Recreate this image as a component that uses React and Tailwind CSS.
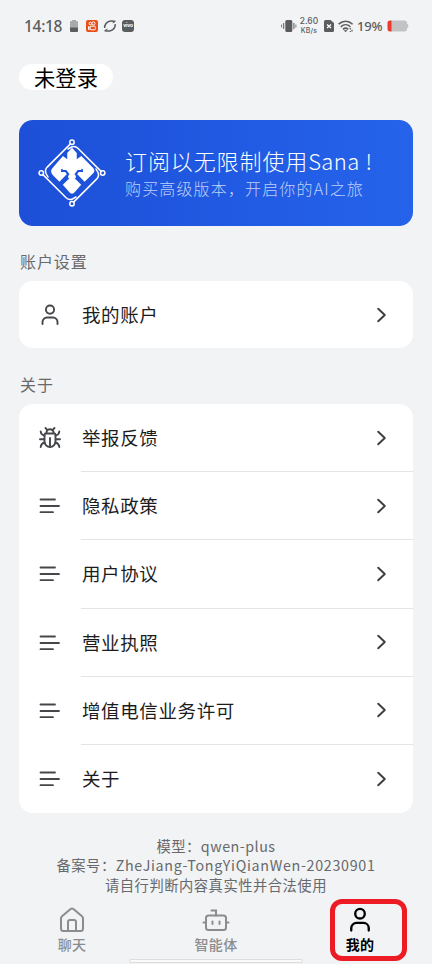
const ABOUT_ITEMS = ['举报反馈', '隐私政策', '用户协议', '营业执照', '增值电信业务许可', '关于'];

function StatusBar() {
  return (
    <div className="h-[52px] flex items-center justify-between pl-[24px] pr-[24px] text-[#5b5c5e]">
      <div className="flex items-center">
        <span className="w-[45px] text-[15.5px] font-medium tracking-[-0.3px] font-['Noto_Sans','Noto_Sans_CJK_SC',sans-serif] leading-[20px] whitespace-nowrap">14:18</span>
        <svg width="10" height="14" viewBox="0 0 10 14" className="shrink-0">
          <path d="M3 1h4v1h1q1 0 1 1v6H1V3q0-1 1-1h1z" fill="#a9aaab" />
          <path d="M1 8.5h8V12q0 1-1 1H2q-1 0-1-1z" fill="#5b5c5e" />
        </svg>
        <svg width="12" height="12" viewBox="0 0 12 12" className="ml-[7px] shrink-0">
          <rect width="12" height="12" rx="2" fill="#e84f19" />
          <g fill="none" stroke="#fff" strokeWidth="1">
            <circle cx="4.3" cy="3.5" r="1.3" />
            <circle cx="7.4" cy="3.4" r="1.6" />
            <rect x="4.2" y="6.2" width="5.2" height="3.6" rx="1" />
            <path d="M4.2 7.3 2.5 6.6v3l1.7-.7" />
          </g>
        </svg>
        <svg width="14" height="14" viewBox="0 0 14 14" className="ml-[5px] shrink-0" fill="none" stroke="#5b5c5e">
          <path d="M1.800 8.800C1.200 6 3.700 3 6.500 2.300 8.500 1.800 10.500 1.900 12.300 2.600" strokeWidth="1.600" />
          <path d="M12.200 5.200c.6 2.800-1.900 5.800-4.700 6.500C5.500 12.200 3.500 12.100 1.700 11.400" strokeWidth="1.600" />
          <path d="M1.700 11.700 4.500 10M12.300 2.300 9.700 4" strokeWidth="1" />
        </svg>
        <div className="ml-[5px] w-[12px] h-[12px] rounded-[3px] bg-[#5b5c5e] text-white text-[5px] leading-[11px] text-center font-bold font-['Inter',sans-serif] tracking-[-0.2px]">vivo</div>
      </div>
      <div className="flex items-center">
        <svg width="16" height="14" viewBox="0 0 16 14" fill="#5b5c5e" className="shrink-0">
          <rect x="4.300" y="1" width="7" height="12" rx="1.500" />
          <path d="M2.200 4h1v6h-1zM.3 5.500h.8v3H.3zM12.400 4h1v6h-1zM14.500 5.500h.8v3h-.8z" />
        </svg>
        <div className="ml-[2px] w-[20px] h-[18px] flex flex-col justify-between items-center font-medium font-['Inter',sans-serif] whitespace-nowrap">
          <span className="text-[8.500px] leading-[9px]">2.60</span>
          <span className="text-[7px] leading-[8px] tracking-[0.2px]">KB/s</span>
        </div>
        <svg width="10" height="12" viewBox="0 0 10 12" className="ml-[5px] shrink-0">
          <path d="M1.500 0H6.500L10 3v7.500Q10 12 8.500 12h-7Q0 12 0 10.500v-9Q0 0 1.500 0z" fill="#5b5c5e" />
          <path d="M3 4.500 7 8M7 4.500 3 8" stroke="#fff" strokeWidth="1.300" />
        </svg>
        <svg width="16" height="13" viewBox="0 0 16 13" className="ml-[4px] shrink-0" fill="none" stroke="#5b5c5e" strokeWidth="1.600">
          <path d="M.6 4.200C5 .2 10.500.2 14.600 4.200M2.800 6.800c3-2.800 6.800-2.800 9.600 0M5 9.300c1.600-1.500 3.600-1.500 5.200 0" />
          <path d="M6.200 10.300h2.800L7.600 12z" fill="#5b5c5e" strokeWidth=".5" />
          <path d="M12.300 7.800v1.800M14 9.800v1.800M12.300 11v1" strokeWidth="1.200" />
        </svg>
        <span className="ml-[3px] w-[27px] text-[13px] font-medium font-['Noto_Sans',sans-serif] leading-[20px] tracking-[-0.2px] whitespace-nowrap">19%</span>
        <svg width="22" height="12" viewBox="0 0 22 12" className="ml-[3px] -mr-px shrink-0">
          <path d="M4 .5h13.500q2.500 0 2.500 2.500v.7q1.300.3 1.300 1.300v2q0 1-1.300 1.300V9q0 2.500-2.500 2.500H4z" fill="#c3c3c6" />
          <path d="M4.500.5v11H3Q.5 11.500.5 9V3Q.5.5 3 .5z" fill="#ee3b2f" />
        </svg>
      </div>
    </div>
  );
}

// one circuit arm per side, each turned by 90 degrees around the centre
function Logo() {
  return (
    <svg width="68" height="68" viewBox="0 0 68 68" fill="none" className="shrink-0">
      {[0, 90, 180, 270].map(angle => (
        <g key={angle} stroke="#fff" strokeWidth="1.500" strokeLinecap="round" transform={`rotate(${angle} 34 34)`}>
          <circle cx="34" cy="3.300" r="2.200" />
          <path d="M32.400 4.900 9.200 28.100Q6.500 31 8 34.500L10 38" />
        </g>
      ))}
      <g transform="translate(34 33.500) scale(.95) translate(-34 -33)">
        <path
          d="M34 7 39 12.500V19l4.800-3.300L56.600 28.500q1.800 2.300 0 5L47 43 38 35.500 34 37.500 30 35.500 21 43 13.500 35.300Q10.500 31.500 13.500 28.300L24.500 15.700 29 19v-6.500z"
          fill="#fff"
        />
        <path d="M34 36.500 43.700 46 36 54.500q-2 1.500-4 0L24.300 46z" fill="#fff" />
        <path d="M30 33h8v6h-8z" fill="#fff" />
        <path d="M23.500 29.500v2h4l2.500 3.300L21.500 43.500M44.500 29.500v2h-4L38 34.800l8.500 8.700" stroke="#1f53db" strokeWidth="2.200" />
      </g>
    </svg>
  );
}

function UserIcon({ size = 24, width = 1.9 }) {
  return (
    <svg width={size} height={size} viewBox="0 0 24 24" fill="none" stroke="currentColor" strokeWidth={width} strokeLinecap="round">
      <circle cx="12" cy="6.600" r="4.100" />
      <path d="M4.500 21v-2a4.500 4.500 0 0 1 4.500-4.500h6a4.500 4.500 0 0 1 4.500 4.500v2" />
    </svg>
  );
}

function BugIcon() {
  return (
    <svg width="24" height="24" viewBox="0 0 24 24" fill="none" stroke="currentColor" strokeWidth="1.900" strokeLinecap="round">
      <path d="M7.500 2l1.700 1.800M16.500 2l-1.700 1.800" />
      <path d="M8.500 7V6.300a3.500 3 0 0 1 7 0V7" />
      <path d="M6.500 8.500q0-1 1-1h9q1 0 1 1v6.700a5.500 5.800 0 0 1-11 0z" />
      <path d="M12 12v8.500M6.500 9.500Q3 9 2.700 5.500M17.500 9.500Q21 9 21.300 5.500M6.300 13.300H2M17.700 13.300H22M6.500 16.500Q3 17.500 2.700 21M17.500 16.500Q21 17.500 21.300 21" />
    </svg>
  );
}

function LinesIcon() {
  return (
    <svg width="24" height="24" viewBox="0 0 24 24" fill="none" stroke="currentColor" strokeWidth="1.800" strokeLinecap="round">
      <path d="M2.500 5.500h14.500M2.500 12h18.500M2.500 18.200h12.500" />
    </svg>
  );
}

function Row({ icon, label, last }) {
  return (
    <div className="flex flex-1 pl-[19px]">
      <div className="w-[43px] flex items-center text-[#46474b]">{icon}</div>
      <div className={`flex-1 flex items-center justify-between pl-px pr-[24px] ${last ? '' : 'border-b border-[#e3e4e6]'}`}>
        <span className="text-[18.500px] tracking-[0.620px] leading-[28px] pb-px text-[#1c1c1e]">{label}</span>
        <svg width="14" height="16" viewBox="0 0 14 16" fill="none" stroke="#3c3d40" strokeWidth="1.900" strokeLinecap="round" strokeLinejoin="round">
          <path d="M3.200 1.700 9.800 8l-6.600 6.300" />
        </svg>
      </div>
    </div>
  );
}

function BottomNav() {
  return (
    <nav className="h-[68px] grid grid-cols-3 text-[#8b8c8e] text-[14px] tracking-[0.3px] font-medium relative">
      <div className="flex flex-col items-center pt-[10px]">
        <svg width="28" height="28" viewBox="0 0 28 28" fill="none" stroke="currentColor" strokeWidth="2" strokeLinejoin="round">
          <path d="M3 12.200q0-1.200 1-2L12.600 3q1.400-1.100 2.800 0L24 10.200q1 .8 1 2V22.500q0 2.500-2.500 2.500h-17Q3 25 3 22.500z" />
          <path d="M10 25v-9q0-2 2-2h4q2 0 2 2v9" />
        </svg>
        <span className="leading-[20px]">聊天</span>
      </div>
      <div className="flex flex-col items-center pt-[10px]">
        <svg width="28" height="28" viewBox="0 0 28 28" fill="none" stroke="currentColor" strokeWidth="2" strokeLinecap="round">
          <rect x="4" y="9.500" width="20" height="14.500" rx="2.500" />
          <path d="M14 9.500V4.500H9.500M1.500 16.500h2M24.500 16.500h2M10.500 15.500v2.500M17.500 15.500v2.500" />
        </svg>
        <span className="leading-[20px]">智能体</span>
      </div>
      <div className="flex flex-col items-center pt-[10px] text-black font-bold">
        <UserIcon size={28} width={2} />
        <span className="leading-[20px]">我的</span>
      </div>
      <div className="absolute left-[330px] top-[3px] w-[77px] h-[62px] rounded-[12px] border-[5px] border-[#ed1c24]" />
      <div className="absolute left-[129px] top-[63px] w-[174px] h-[4px] rounded-[2px] bg-[#fafafa] border border-[#dcdddf]" />
    </nav>
  );
}

export default function App() {
  return (
    <div className="w-[432px] h-[964px] overflow-hidden bg-[#f1f3f5] flex flex-col font-['Noto_Sans_CJK_SC',sans-serif]">
      <StatusBar />

      <div className="px-[19px] pt-[12px]">
        <div className="w-[94px] h-[26px] rounded-full bg-white flex items-center justify-center text-[21.300px] leading-[26px] pb-px text-black">未登录</div>
      </div>

      <div className="mx-[19px] mt-[30px] h-[106px] shrink-0 rounded-[14px] bg-linear-to-r from-[#1d4fd8] to-[#2563eb] flex items-center pl-[19px] text-white">
        <Logo />
        <div className="ml-[19px] font-light whitespace-nowrap">
          <div className="text-[22px] leading-[30px] tracking-[0.9px]">订阅以无限制使用<span className="tracking-[0.4px]">Sana</span> !</div>
          <div className="text-[16px] leading-[26px] tracking-[1.150px] text-[#bfd0f8]">购买高级版本，开启你的AI之旅</div>
        </div>
      </div>

      <div className="px-[20px] mt-[23px] text-[16px] leading-[24px] tracking-[0.900px] text-[#68696c]">账户设置</div>
      <div className="mx-[19px] mt-[8px] h-[67px] shrink-0 rounded-[14px] bg-white flex flex-col">
        <Row icon={<UserIcon />} label="我的账户" last />
      </div>

      <div className="px-[20px] mt-[24px] text-[16px] leading-[24px] tracking-[0.900px] text-[#68696c]">关于</div>
      <div className="mx-[19px] mt-[8px] h-[409px] shrink-0 rounded-[14px] bg-white flex flex-col">
        {ABOUT_ITEMS.map((label, i) => (
          <Row key={label} icon={i === 0 ? <BugIcon /> : <LinesIcon />} label={label} last={i === ABOUT_ITEMS.length - 1} />
        ))}
      </div>

      <div className="mt-[23px] h-[60px] shrink-0 text-center text-[14.300px] leading-[19.300px] tracking-[0.500px] text-[#68696c] whitespace-nowrap">
        <p>模型：qwen-plus</p>
        <p>备案号：<span className="tracking-[0.680px]">ZheJiang-TongYiQianWen-20230901</span></p>
        <p>请自行判断内容真实性并合法使用</p>
      </div>

      <BottomNav />
    </div>
  );
}
